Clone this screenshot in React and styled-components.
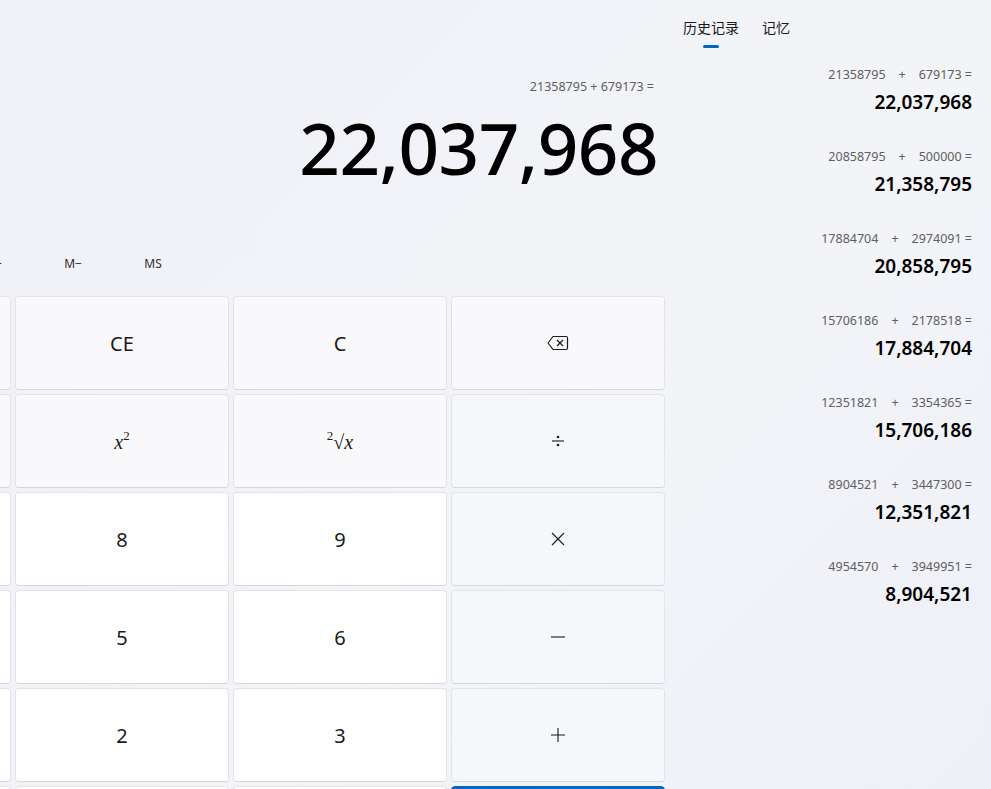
import styled, { createGlobalStyle } from "styled-components";

const Global = createGlobalStyle`
  html, body { margin: 0; height: 100%; overflow: hidden; }
  body {
    font-family: "Noto Sans", "Open Sans", "Noto Sans CJK SC", sans-serif;
    background: linear-gradient(135deg, #f0f1f6 0%, #f3f4f8 60%, #eef0f6 100%);
    color: #1a1a1a;
  }
`;

const Page = styled.div`
  display: flex;
  width: 991px;
  height: 789px;
`;

const Main = styled.div`
  width: 670px;
  display: flex;
  flex-direction: column;
  overflow: hidden;
  & > * { flex-shrink: 0; }
`;

const Display = styled.div`
  display: flex;
  flex-direction: column;
  align-items: flex-end;
  padding: 78px 16px 0 0;
  height: 162px;
`;

const Expr = styled.div`
  font-size: 12.5px;
  color: #606060;
`;

const Result = styled.div`
  font-size: 71px;
  font-weight: 500;
  line-height: 1;
  margin-top: 17px;
  margin-right: -4px;
  letter-spacing: -0.5px;
  color: #000;
`;

const MemRow = styled.div`
  display: flex;
  height: 47px;
  align-items: center;
  margin-left: -47px;
`;

const MemBtn = styled.div`
  width: 80px;
  text-align: center;
  font-size: 12px;
  color: #303030;
`;

const Keys = styled.div`
  display: grid;
  grid-template-columns: repeat(4, 214px);
  grid-auto-rows: 94px;
  gap: 4px;
  margin-left: -203px;
  margin-top: 9px;
`;

const Key = styled.div`
  display: flex;
  align-items: center;
  justify-content: center;
  border-radius: 4px;
  border: 1px solid #e3e4e9;
  border-bottom-color: #d6d7dc;
  font-size: 20px;
  color: #1a1a1a;
  background: ${({ kind }) =>
    kind === "num" ? "#ffffff" : kind === "accent" ? "#0067c0" : kind === "op" ? "#f6f7fa" : "#f9f9fb"};
  ${({ kind }) => kind === "accent" && "border-color: #0067c0;"}
`;

const MathTxt = styled.span`
  font-family: "Liberation Serif", "DejaVu Serif", serif;
  font-style: italic;
  font-size: 20px;
  sup { font-style: normal; font-size: 13px; vertical-align: 9px; }
`;

const Side = styled.div`
  flex: 1;
  display: flex;
  flex-direction: column;
  padding-right: 19px;
`;

const Tabs = styled.div`
  display: flex;
  gap: 23px;
  padding: 17px 0 0 13px;
`;

const Tab = styled.div`
  position: relative;
  font-size: 14px;
  line-height: 22px;
  color: #1a1a1a;
  ${({ active }) => active && `
    &::after {
      content: "";
      position: absolute;
      left: 50%;
      bottom: -9px;
      width: 16px;
      height: 3px;
      margin-left: -8px;
      border-radius: 2px;
      background: #0067c0;
    }
  `}
`;

const History = styled.div`
  display: flex;
  flex-direction: column;
  align-items: flex-end;
  margin-top: 27px;
  gap: 32px;
`;

const Entry = styled.div`
  display: flex;
  flex-direction: column;
  align-items: flex-end;
`;

const HExpr = styled.div`
  font-size: 12.5px;
  color: #606060;
  white-space: pre;
  line-height: 18px;
`;

const HRes = styled.div`
  font-size: 19px;
  font-weight: 600;
  line-height: 28px;
  margin-top: 4px;
  color: #000;
`;

const Backspace = () => (
  <svg width="22" height="16" viewBox="0 0 22 16" fill="none" stroke="#1a1a1a" strokeWidth="1.2">
    <path d="M6 1.5h13a1.5 1.5 0 0 1 1.5 1.5v10a1.5 1.5 0 0 1-1.5 1.5H6L1 8z" strokeLinejoin="round" />
    <path d="M10 5l6 6M16 5l-6 6" />
  </svg>
);

const Glyph = ({ d }) => (
  <svg width="18" height="18" viewBox="0 0 18 18" fill="none" stroke="#1a1a1a" strokeWidth="1.1">
    {d}
  </svg>
);

const history = [
  ["21358795", "679173", "22,037,968"],
  ["20858795", "500000", "21,358,795"],
  ["17884704", "2974091", "20,858,795"],
  ["15706186", "2178518", "17,884,704"],
  ["12351821", "3354365", "15,706,186"],
  ["8904521", "3447300", "12,351,821"],
  ["4954570", "3949951", "8,904,521"],
];

export default function App() {
  return (
    <>
      <Global />
      <Page>
        <Main>
          <Display>
            <Expr>21358795 + 679173 =</Expr>
            <Result>22,037,968</Result>
          </Display>
          <MemRow>
            <MemBtn>M+</MemBtn>
            <MemBtn>M−</MemBtn>
            <MemBtn>MS</MemBtn>
          </MemRow>
          <Keys>
            <Key kind="fn">%</Key>
            <Key kind="fn">CE</Key>
            <Key kind="fn">C</Key>
            <Key kind="fn"><Backspace /></Key>

            <Key kind="fn">¹⁄ₓ</Key>
            <Key kind="fn"><MathTxt>x<sup>2</sup></MathTxt></Key>
            <Key kind="fn"><MathTxt><sup>2</sup>√x</MathTxt></Key>
            <Key kind="op">
              <Glyph d={<><path d="M3 9h12" /><circle cx="9" cy="5" r="0.8" fill="#1a1a1a" /><circle cx="9" cy="13" r="0.8" fill="#1a1a1a" /></>} />
            </Key>

            <Key kind="num">7</Key>
            <Key kind="num">8</Key>
            <Key kind="num">9</Key>
            <Key kind="op"><Glyph d={<path d="M3 3l12 12M15 3L3 15" />} /></Key>

            <Key kind="num">4</Key>
            <Key kind="num">5</Key>
            <Key kind="num">6</Key>
            <Key kind="op"><Glyph d={<path d="M2 9h14" />} /></Key>

            <Key kind="num">1</Key>
            <Key kind="num">2</Key>
            <Key kind="num">3</Key>
            <Key kind="op"><Glyph d={<path d="M2 9h14M9 2v14" />} /></Key>

            <Key kind="num">+/−</Key>
            <Key kind="num">0</Key>
            <Key kind="num">.</Key>
            <Key kind="accent" />
          </Keys>
        </Main>
        <Side>
          <Tabs>
            <Tab active>历史记录</Tab>
            <Tab>记忆</Tab>
          </Tabs>
          <History>
            {history.map(([a, b, r]) => (
              <Entry key={r}>
                <HExpr>{`${a}    +    ${b} =`}</HExpr>
                <HRes>{r}</HRes>
              </Entry>
            ))}
          </History>
        </Side>
      </Page>
    </>
  );
}
